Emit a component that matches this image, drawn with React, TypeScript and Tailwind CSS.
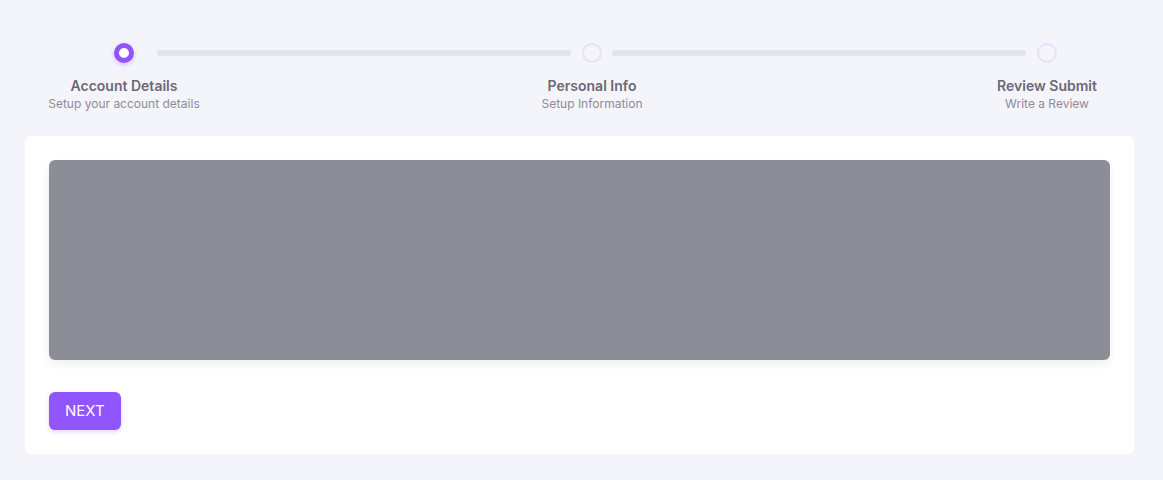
const steps = [
  { title: "Account Details", subtitle: "Setup your account details", ml: "ml-[-1px]" },
  { title: "Personal Info", subtitle: "Setup Information", ml: "ml-[268px]" },
  { title: "Review Submit", subtitle: "Write a Review", ml: "ml-[255px]" },
];

function Dot({ active }: { active?: boolean }) {
  if (active) {
    return (
      <div className="w-[20px] h-[20px] shrink-0 rounded-full border-[5px] border-[#9155fd] bg-white shadow-[0_2px_4px_rgba(145,85,253,0.35)]" />
    );
  }
  return <div className="w-[20px] h-[20px] shrink-0 rounded-full border-2 border-[#e6e0fc]" />;
}

export default function App() {
  return (
    <div
      className="min-h-screen bg-[#f4f5fa] pt-[43px] pl-[25px] pr-[29px] pb-[26px]"
      style={{ fontFamily: "Inter, 'Noto Sans', sans-serif" }}
    >
      <div className="flex items-center h-[20px] pl-[89px] pr-[77px]">
        <Dot active />
        <div className="ml-[23px] flex-1 h-[6px] rounded-full bg-[#e3e4ea]" />
        <div className="ml-[11px]">
          <Dot />
        </div>
        <div className="ml-[10px] flex-1 h-[6px] rounded-full bg-[#e3e4ea]" />
        <div className="ml-[11px]">
          <Dot />
        </div>
      </div>

      <div className="flex mt-[13px]">
        {steps.map((s) => (
          <div key={s.title} className={`w-[200px] shrink-0 text-center ${s.ml}`}>
            <div className="text-[14px] leading-[20px] font-semibold text-[#6d6778]">{s.title}</div>
            <div className="text-[12px] leading-[16px] text-[#8f8b99]">{s.subtitle}</div>
          </div>
        ))}
      </div>

      <div className="mt-[24px] bg-white rounded-md p-[24px]">
        <div className="h-[200px] rounded-md bg-[#8b8e96] shadow-[0_4px_8px_rgba(58,53,65,0.08)]" />
        <button className="mt-[32px] h-[38px] px-[16px] rounded-md bg-[#9155fd] text-white text-[15px] font-normal shadow-[0_2px_4px_rgba(145,85,253,0.25)]">
          NEXT
        </button>
      </div>
    </div>
  );
}
